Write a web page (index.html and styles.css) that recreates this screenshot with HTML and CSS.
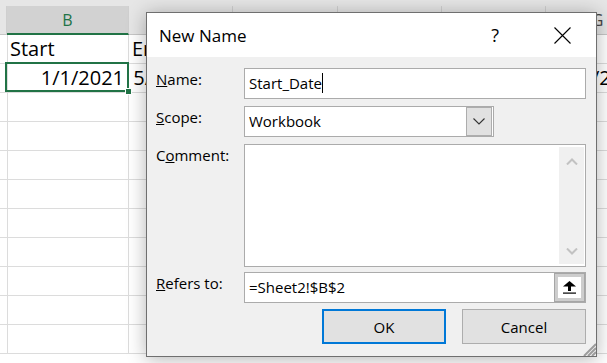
FILE: index.html
```html
<!DOCTYPE html>
<html>
<head>
  <link rel="stylesheet" href="styles.css">
</head>
<body>
  <div class="sheet">
    <div class="top-strip"></div>
    <div class="grid">
      <div class="hdr"></div><div class="hdr active">B</div><div class="hdr">C</div><div class="hdr">D</div><div class="hdr">E</div><div class="hdr">F</div><div class="hdr">G</div>

      <div class="cell"></div><div class="cell">Start</div><div class="cell">End</div><div class="cell"></div><div class="cell"></div><div class="cell"></div><div class="cell"></div>
      <div class="cell"></div>
      <div class="cell num selected">1/1/2021
        <div class="sel-box"></div>
        <div class="fill-handle"></div>
      </div>
      <div class="cell num">5/31/2021</div><div class="cell"></div><div class="cell"></div><div class="cell"></div><div class="cell num">1/31/2021</div>

      <div class="cell"></div><div class="cell"></div><div class="cell"></div><div class="cell"></div><div class="cell"></div><div class="cell"></div><div class="cell"></div>
      <div class="cell"></div><div class="cell"></div><div class="cell"></div><div class="cell"></div><div class="cell"></div><div class="cell"></div><div class="cell"></div>
      <div class="cell"></div><div class="cell"></div><div class="cell"></div><div class="cell"></div><div class="cell"></div><div class="cell"></div><div class="cell"></div>
      <div class="cell"></div><div class="cell"></div><div class="cell"></div><div class="cell"></div><div class="cell"></div><div class="cell"></div><div class="cell"></div>
      <div class="cell"></div><div class="cell"></div><div class="cell"></div><div class="cell"></div><div class="cell"></div><div class="cell"></div><div class="cell"></div>
      <div class="cell"></div><div class="cell"></div><div class="cell"></div><div class="cell"></div><div class="cell"></div><div class="cell"></div><div class="cell"></div>
      <div class="cell"></div><div class="cell"></div><div class="cell"></div><div class="cell"></div><div class="cell"></div><div class="cell"></div><div class="cell"></div>
      <div class="cell"></div><div class="cell"></div><div class="cell"></div><div class="cell"></div><div class="cell"></div><div class="cell"></div><div class="cell"></div>
      <div class="cell"></div><div class="cell"></div><div class="cell"></div><div class="cell"></div><div class="cell"></div><div class="cell"></div><div class="cell"></div>
    </div>
  </div>

  <div class="dialog">
    <div class="title-bar">
      <div class="title">New Name</div>
      <div class="help">?</div>
      <div class="close">
        <svg width="17" height="17" viewBox="0 0 17 17">
          <path d="M0.5 0.5 L16.5 16.5 M16.5 0.5 L0.5 16.5" stroke="#000" stroke-width="1.1" fill="none"/>
        </svg>
      </div>
    </div>

    <div class="form">
      <div class="label"><u>N</u>ame:</div>
      <div class="field">
        <span class="value">Start_Date</span><span class="caret"></span>
      </div>

      <div class="label"><u>S</u>cope:</div>
      <div class="field scope">
        <span class="value">Workbook</span>
        <div class="drop-btn">
          <svg width="12" height="7" viewBox="0 0 12 7">
            <path d="M0.5 0.5 L6 6 L11.5 0.5" stroke="#333" stroke-width="1.1" fill="none"/>
          </svg>
        </div>
      </div>

      <div class="label">C<u>o</u>mment:</div>
      <div class="comment">
        <div class="scrollbar">
          <svg width="12" height="7" viewBox="0 0 12 7">
            <path d="M1 6.5 L6 1.5 L11 6.5" stroke="#c2c2c2" stroke-width="2" fill="none"/>
          </svg>
          <svg width="12" height="7" viewBox="0 0 12 7">
            <path d="M1 0.5 L6 5.5 L11 0.5" stroke="#c2c2c2" stroke-width="2" fill="none"/>
          </svg>
        </div>
      </div>

      <div class="label tight"><u>R</u>efers to:</div>
      <div class="field tight">
        <span class="value">=Sheet2!$B$2</span>
        <div class="ref-btn">
          <svg width="13" height="13" viewBox="0 0 13 13">
            <polygon points="6.5,0 13,5.5 0,5.5" fill="#000"/>
            <rect x="5" y="5" width="3" height="5" fill="#000"/>
            <rect x="0" y="11.5" width="13" height="1.2" fill="#000"/>
          </svg>
        </div>
      </div>
    </div>

    <div class="actions">
      <button class="btn default">OK</button>
      <button class="btn">Cancel</button>
    </div>

    <svg class="grip" width="14" height="14" viewBox="0 0 14 14">
      <path d="M2 14 L14 2 M6 14 L14 6 M10 14 L14 10" stroke="#9c9c9c" stroke-width="2" fill="none"/>
    </svg>
  </div>
</body>
</html>
```

FILE: styles.css
```css
* {
  box-sizing: border-box;
}

body {
  margin: 0;
  width: 607px;
  height: 363px;
  overflow: hidden;
  position: relative;
  background: #fff;
  font-family: "Open Sans", sans-serif;
}

/* Spreadsheet behind the dialog */
.top-strip {
  height: 6px;
  background: #e6e6e6;
}

.grid {
  display: grid;
  grid-template-columns: 7px 122px 104px 105px 104px 104px 104px;
  grid-auto-rows: 29px;
  width: 650px;
}

.hdr {
  background: #e6e6e6;
  border-right: 1px solid #cfcfcf;
  border-bottom: 1px solid #c6c6c6;
  font-size: 16px;
  line-height: 27px;
  padding-top: 1px;
  text-align: center;
  color: #444;
}

.hdr.active {
  background: #d2d2d2;
  color: #217346;
  border-bottom: 2px solid #217346;
}

.cell {
  border-right: 1px solid #dcdcdc;
  border-bottom: 1px solid #dcdcdc;
  font-size: 20px;
  line-height: 28px;
  padding: 0 4px 0 3px;
  white-space: nowrap;
  color: #000;
}

.num {
  text-align: right;
}

.selected {
  position: relative;
}

.sel-box {
  position: absolute;
  left: -2px;
  top: -2px;
  width: 124px;
  height: 30px;
  border: 2px solid #217346;
}

.fill-handle {
  position: absolute;
  left: 118px;
  top: 24px;
  width: 7px;
  height: 7px;
  background: #217346;
  border: 1px solid #fff;
}

/* New Name dialog */
.dialog {
  position: absolute;
  left: 146px;
  top: 12px;
  width: 451px;
  height: 345px;
  background: #f0f0f0;
  border: 1px solid #6f6f6f;
  box-shadow: 0 2px 18px rgba(0, 0, 0, 0.3);
}

.title-bar {
  height: 44px;
  background: #fff;
  display: flex;
  align-items: center;
  padding: 0 25px 0 12px;
}

.title {
  flex: 1;
  font-size: 17px;
  color: #000;
}

.help {
  font-size: 18px;
  color: #000;
  margin-right: 55px;
}

.close svg {
  display: block;
}

.form {
  display: grid;
  grid-template-columns: 88px 1fr;
  row-gap: 7px;
  padding: 11px 10px 0 9px;
}

.label {
  font-size: 15px;
  line-height: 20px;
  padding-top: 1px;
  color: #000;
}

.field {
  height: 31px;
  border: 1px solid #ababab;
  background: #fff;
  display: flex;
  align-items: center;
  padding-left: 4px;
  font-size: 15px;
  color: #000;
}

.value {
  line-height: 20px;
  margin-bottom: 2px;
}

.caret {
  width: 1px;
  height: 20px;
  background: #000;
  margin-bottom: 2px;
}

.scope {
  width: 250px;
}

.drop-btn {
  margin-left: auto;
  margin-right: 1px;
  width: 26px;
  align-self: stretch;
  border: 1px solid #adadad;
  background: #e1e1e1;
  display: flex;
  align-items: center;
  justify-content: center;
}

.comment {
  height: 123px;
  border: 1px solid #ababab;
  background: #fff;
  display: flex;
  justify-content: flex-end;
}

.scrollbar {
  width: 25px;
  margin: 2px 1px 2px 0;
  background: #f0f0f0;
  display: flex;
  flex-direction: column;
  justify-content: space-between;
  align-items: center;
  padding: 11px 0 9px;
}

.tight {
  margin-top: -2px;
}

.ref-btn {
  margin-left: auto;
  width: 31px;
  align-self: stretch;
  border: 1px solid #a6a6a6;
  box-shadow: inset 0 0 0 3px #cdcdcd;
  background: #fff;
  display: flex;
  align-items: center;
  justify-content: center;
}

.actions {
  display: flex;
  justify-content: flex-end;
  gap: 16px;
  padding: 6px 10px 0 0;
}

.btn {
  width: 124px;
  height: 35px;
  background: #e1e1e1;
  border: 1px solid #adadad;
  font-family: "Open Sans", sans-serif;
  font-size: 15px;
  color: #000;
  padding: 0;
}

.btn.default {
  border: 2px solid #0078d7;
}

.grip {
  position: absolute;
  right: 0;
  bottom: 0;
}
```
